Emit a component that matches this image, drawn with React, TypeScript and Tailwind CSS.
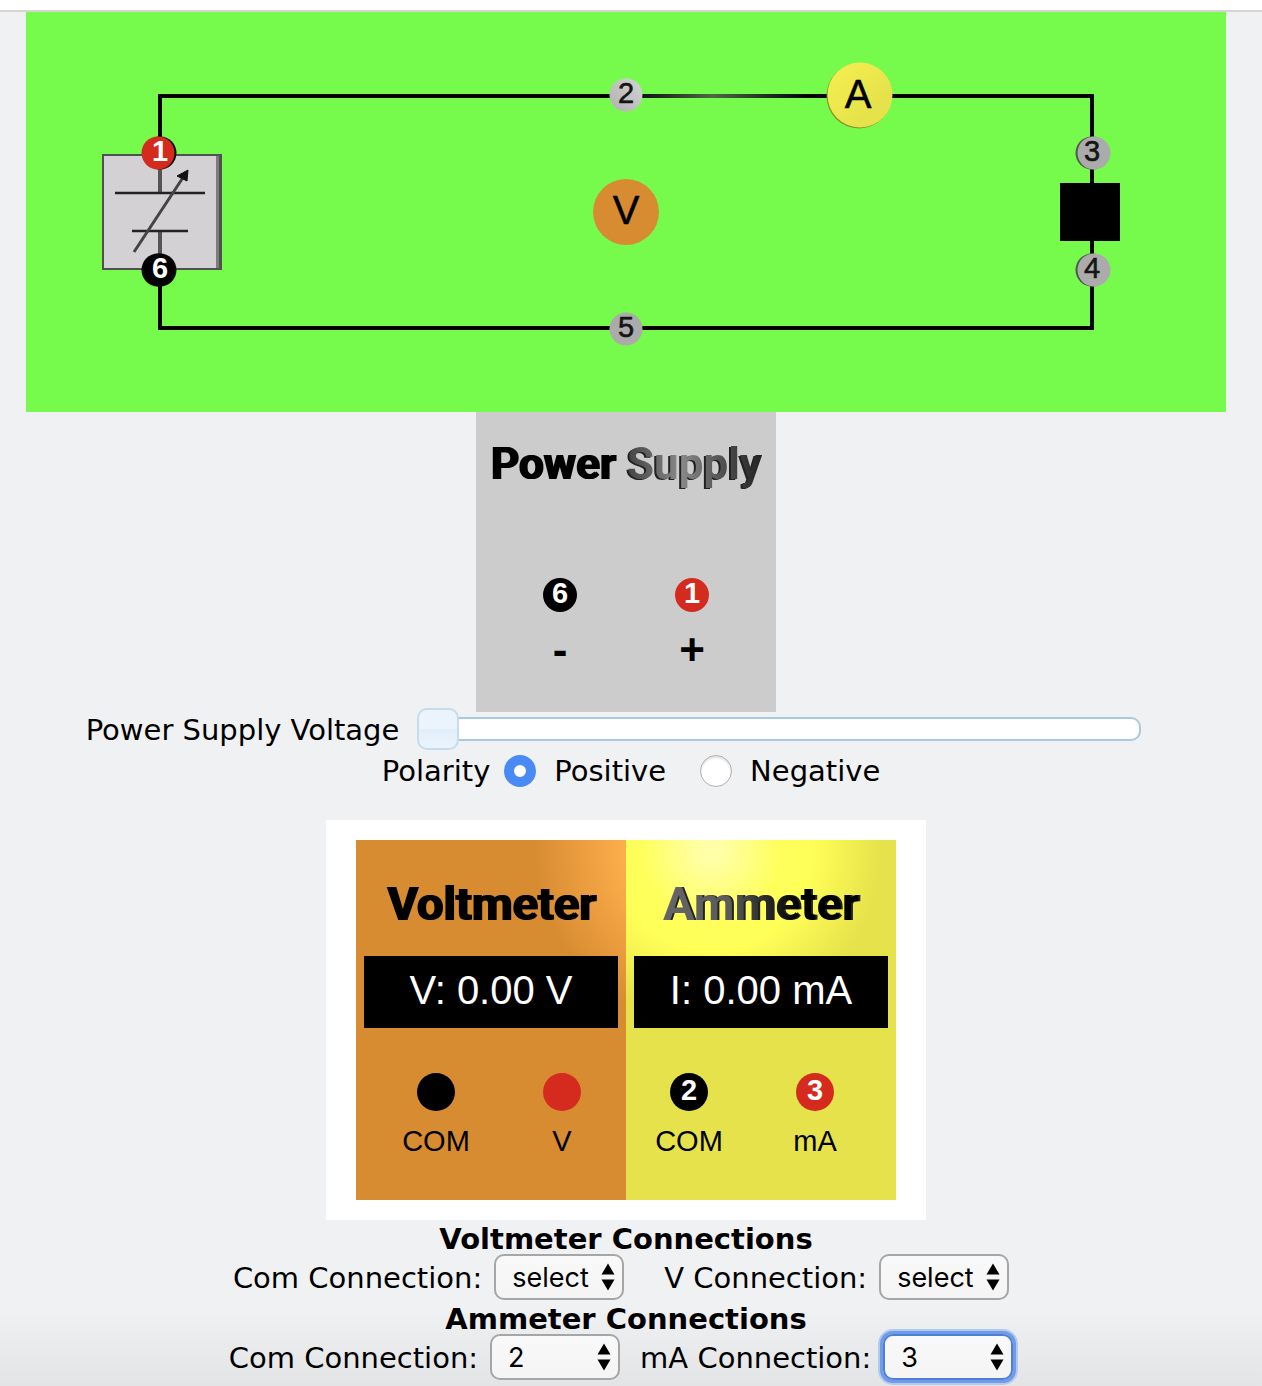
import { useState } from "react";
import type { ReactNode } from "react";

const helvetica = "font-['Liberation_Sans',Arial,sans-serif]";

type NodeProps = {
  cx: number;
  cy: number;
  label: string;
  tx: number;
  fill: string;
  color: string;
  shade?: number;
  bold?: boolean;
};

function CircuitNode({ cx, cy, label, tx, fill, color, shade, bold }: NodeProps) {
  return (
    <g>
      {shade !== undefined && <circle cx={cx + shade} cy={cy} r="16.5" fill={bold ? "#0c0c0c" : "#4d5a4a"} />}
      <circle cx={cx} cy={cy} r="16.5" fill={fill} />
      <text x={tx} y={cy + 8} fill={color} stroke={color} strokeWidth={bold ? 0 : 0.6} fontSize="29" fontWeight={bold ? 700 : 400} textAnchor="middle">
        {label}
      </text>
    </g>
  );
}

function Circuit() {
  return (
    <svg viewBox="0 0 1200 400" className={`block w-full max-w-[1200px] bg-[#76fb4c] ${helvetica}`} role="img" aria-label="Circuit diagram">
      <defs>
        <linearGradient id="wire" gradientUnits="userSpaceOnUse" x1="616" y1="0" x2="801" y2="0">
          <stop offset="0" stopColor="#111" />
          <stop offset="0.38" stopColor="#4a6a44" />
          <stop offset="0.9" stopColor="#000" />
        </linearGradient>
        <linearGradient id="lit" x1="0" y1="0" x2="0.7" y2="0.7">
          <stop offset="0" stopColor="#f5f050" />
          <stop offset="1" stopColor="#e6e24b" />
        </linearGradient>
        <linearGradient id="node" x1="1" y1="0" x2="0" y2="1">
          <stop offset="0" stopColor="#d4d4d4" />
          <stop offset="1" stopColor="#b0b0b0" />
        </linearGradient>
      </defs>
      <g fill="#000">
        <rect x="132" y="82" width="452" height="4" />
        <rect x="616" y="82" width="186" height="4" fill="url(#wire)" />
        <rect x="866" y="82" width="202" height="4" />
        <rect x="132" y="314" width="936" height="4" />
        <rect x="132" y="82" width="4" height="60" />
        <rect x="132" y="258" width="4" height="60" />
        <rect x="1064" y="82" width="4" height="236" />
      </g>
      <rect x="76" y="142" width="120" height="116" fill="#505050" />
      <rect x="78" y="144" width="113" height="112" fill="#d3d1d4" />
      <rect x="190" y="144" width="3" height="112" fill="#7c7c7c" />
      <path d="M134 157V181M134 219V243" stroke="#555" strokeWidth="4" />
      <path d="M89 181H179M106 219H162" stroke="#222" strokeWidth="2.5" />
      <path d="M108 240L158 164" stroke="#444" strokeWidth="3" />
      <path d="M162 158L151 164L161 169Z" fill="#111" stroke="#111" />
      <CircuitNode cx={132} cy={141} tx={134} label="1" fill="#d52b1e" color="#fff" shade={2} bold />
      <CircuitNode cx={132} cy={258} tx={134} label="6" fill="#000" color="#fff" shade={2} bold />
      <CircuitNode cx={600} cy={83} tx={600} label="2" fill="url(#node)" color="#151515" />
      <CircuitNode cx={600} cy={317} tx={600} label="5" fill="#ababab" color="#151515" />
      <CircuitNode cx={1068} cy={141} tx={1066} label="3" fill="#ababab" color="#151515" shade={-2} />
      <CircuitNode cx={1068} cy={258} tx={1066} label="4" fill="#ababab" color="#151515" shade={-2} />
      <rect x="1034" y="171" width="60" height="58" />
      <circle cx="833" cy="84" r="32.5" fill="#8a932a" />
      <circle cx="834" cy="83" r="32.5" fill="url(#lit)" />
      <circle cx="600" cy="200" r="33" fill="#d88c32" />
      <g fontSize="40" textAnchor="middle" fill="#000" stroke="#000" strokeWidth="0.5">
        <text x="832" y="96">A</text>
        <text x="600" y="212">V</text>
      </g>
    </svg>
  );
}

function Dot({ className, children }: { className: string; children?: ReactNode }) {
  return (
    <span className={`flex items-center justify-center rounded-full pb-1 text-[29px] leading-none font-bold text-white ${helvetica} ${className}`}>
      {children}
    </span>
  );
}

function PowerSupply() {
  return (
    <section className="h-[300px] w-[300px] bg-[#ccc] pt-6">
      <h2 className="flex justify-center gap-3 font-[Roboto,sans-serif] text-[44px] leading-[56px] font-bold">
        <span className="drop-shadow-[2px_0_0_#000]">Power</span>
        <span className="bg-linear-to-r from-[#444] via-[#8a8a8a] via-40% to-[#222] bg-clip-text text-transparent drop-shadow-[-2px_1px_0_#222]">Supply</span>
      </h2>
      <div className={`mt-[86px] ml-[18px] grid w-[264px] grid-cols-2 justify-items-center text-[44px] leading-[44px] font-bold ${helvetica}`}>
        <Dot className="size-[34px] bg-black">6</Dot>
        <Dot className="size-[34px] bg-[#d52b1e]">1</Dot>
        <span className="mt-4">-</span>
        <span className="mt-4">+</span>
      </div>
    </section>
  );
}

type MeterProps = {
  title: ReactNode;
  reading: string;
  com?: string;
  live?: string;
  unit: string;
  className: string;
  jacks: string;
};

function Meter({ title, reading, com, live, unit, className, jacks }: MeterProps) {
  return (
    <section className={`w-1/2 px-2 pt-9 ${className}`}>
      <h2 className="text-center font-[Roboto,sans-serif] text-[47px] leading-[56px] font-bold">{title}</h2>
      <output className={`mt-6 flex h-[72px] items-center justify-center bg-black pb-1 text-[40px] leading-none text-white ${helvetica}`}>{reading}</output>
      <div className={`mt-[45px] grid w-[252px] grid-cols-2 justify-items-center text-[29px] leading-9 ${helvetica} ${jacks}`}>
        <Dot className="size-[38px] bg-black">{com}</Dot>
        <Dot className="size-[38px] bg-[#d52b1e]">{live}</Dot>
        <span className="mt-3">COM</span>
        <span className="mt-3">{unit}</span>
      </div>
    </section>
  );
}

type PickerProps = { id: string; label: string; initial: string; focused?: boolean };

function Picker({ id, label, initial, focused }: PickerProps) {
  const [value, setValue] = useState(initial);
  return (
    <div className="flex items-center gap-3">
      <label htmlFor={id} className="pt-0.5">
        {label}
      </label>
      <div className="relative">
        <select
          id={id}
          value={value}
          onChange={(e) => setValue(e.target.value)}
          className={`block h-[46px] w-[130px] appearance-none rounded-[10px] border-2 bg-linear-to-b from-[#f9f9f9] to-[#f4f4f4] pt-0.5 pl-4 font-[Inter,sans-serif] text-[27px] leading-9 text-black outline-none ${
            focused ? "border-[#4f7fd0] shadow-[0_0_0_3px_#6f9beb,0_0_0_5px_#b4c9ee]" : "border-[#a6a6a6]"
          }`}
        >
          {["select", "1", "2", "3", "4", "5", "6"].map((o) => (
            <option key={o}>{o}</option>
          ))}
        </select>
        <svg viewBox="0 0 14 28" className="pointer-events-none absolute top-[9px] right-[9px] h-7 w-3.5" aria-hidden="true">
          <path d="M7 0.5L13.5 11.5H0.5ZM7 27.5L13.5 16.5H0.5Z" />
        </svg>
      </div>
    </div>
  );
}

export default function App() {
  const [voltage, setVoltage] = useState(0);
  const [polarity, setPolarity] = useState("Positive");
  return (
    <div className="flex min-h-screen flex-col bg-[#f0f1f3] bg-[linear-gradient(to_top,#e3e4e6,#f0f1f3_80px)] font-['DejaVu_Sans',Verdana,sans-serif] text-[29px] leading-[34px] text-black">
      <div className="h-3 border-b-2 border-[#d5d5d5] bg-white" />
      <main className="flex flex-col items-center pr-[10px]">
        <Circuit />
        <PowerSupply />
        <div className="-mt-1 flex items-center gap-[18px] pr-[25px]">
          <label htmlFor="voltage" className="pt-0.5">
            Power Supply Voltage
          </label>
          <input
            id="voltage"
            type="range"
            min={0}
            max={100}
            value={voltage}
            onChange={(e) => setVoltage(Number(e.target.value))}
            className="h-[42px] w-[724px] appearance-none bg-transparent [&::-webkit-slider-runnable-track]:h-6 [&::-webkit-slider-runnable-track]:rounded-[10px] [&::-webkit-slider-runnable-track]:border-2 [&::-webkit-slider-runnable-track]:border-[#a9c9e0] [&::-webkit-slider-runnable-track]:bg-white [&::-webkit-slider-thumb]:-mt-[11px] [&::-webkit-slider-thumb]:-ml-[2px] [&::-webkit-slider-thumb]:size-[42px] [&::-webkit-slider-thumb]:appearance-none [&::-webkit-slider-thumb]:rounded-[10px] [&::-webkit-slider-thumb]:border-2 [&::-webkit-slider-thumb]:border-[#c6dbec] [&::-webkit-slider-thumb]:bg-[linear-gradient(#ebf4fd_50%,#e1eef9_50%,#eaf4fc)]"
          />
        </div>
        <fieldset className="flex h-10 items-center pt-1 pl-[10px]">
          <span className="mr-3.5">Polarity</span>
          {["Positive", "Negative"].map((p) => (
            <label key={p} className="mr-[34px] flex items-center gap-[18px] last:mr-0">
              <input
                type="radio"
                name="polarity"
                value={p}
                checked={polarity === p}
                onChange={() => setPolarity(p)}
                className="size-8 appearance-none rounded-full border border-[#b0b0b0] bg-white shadow-[inset_0_2px_2px_#e0e0e0] checked:border-[10px] checked:border-[#4a8af4] checked:shadow-none"
              />
              {p}
            </label>
          ))}
        </fieldset>
        <div className="mt-[30px] flex h-[400px] w-[600px] bg-white px-[30px] py-5">
          <Meter
            title={<span className="drop-shadow-[2px_0_0_#000]">Voltmeter</span>}
            reading="V: 0.00 V"
            unit="V"
            className="bg-[radial-gradient(circle_at_354px_10px,#ffb04c_80px,#d88c32_175px)]"
            jacks="ml-[9px]"
          />
          <Meter
            title={
              <span className="bg-linear-to-r from-[#666] via-[#5a5a5a] via-35% to-black to-80% bg-clip-text text-transparent drop-shadow-[2px_0_0_#222]">
                Ammeter
              </span>
            }
            reading="I: 0.00 mA"
            unit="mA"
            com="2"
            live="3"
            className="bg-[radial-gradient(circle_at_85px_10px,#ffffa8_10px,#ffff5c_70px,#ffff58_100px,#e6e24b_170px)]"
            jacks="-ml-2"
          />
        </div>
        <h3 className="h-[34px] pt-0.5 font-bold">Voltmeter Connections</h3>
        <div className="flex gap-10 pr-[10px]">
          <Picker id="v-com" label="Com Connection:" initial="select" />
          <Picker id="v-v" label="V Connection:" initial="select" />
        </div>
        <h3 className="h-[34px] pt-0.5 font-bold">Ammeter Connections</h3>
        <div className="flex gap-5 pr-[10px]">
          <Picker id="a-com" label="Com Connection:" initial="2" />
          <Picker id="a-ma" label="mA Connection:" initial="3" focused />
        </div>
      </main>
    </div>
  );
}
